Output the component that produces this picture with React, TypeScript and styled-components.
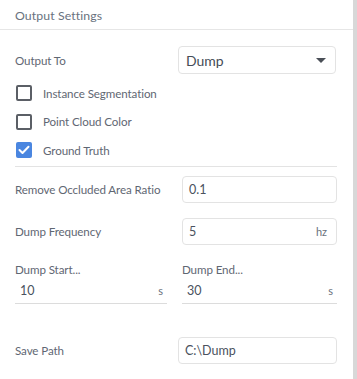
import React from "react";
import styled, { createGlobalStyle } from "styled-components";

const Global = createGlobalStyle`
  html, body { margin: 0; padding: 0; background: #ffffff; }
  body { font-family: Lato, "Open Sans", sans-serif; color: #5f6773; }
  * { box-sizing: border-box; }
`;

const Page = styled.div`
  display: flex;
  width: 357px;
  height: 379px;
  overflow: hidden;
`;

const Panel = styled.div`
  width: 353px;
  display: flex;
  flex-direction: column;
`;

const Scrollbar = styled.div`
  width: 4px;
  background: #d8d8d8;
`;

const Header = styled.div`
  height: 30px;
  border-bottom: 1px solid #e6e6e6;
  padding: 7px 15px 0;
  font-size: 12.3px;
  letter-spacing: 0.1px;
  line-height: 17px;
  color: #69727e;
`;

const Body = styled.div`
  padding: 16px 16px 0 15px;
  display: flex;
  flex-direction: column;
`;

const Row = styled.div<{ $h: number; $mt?: number }>`
  display: flex;
  align-items: center;
  height: ${(p) => p.$h}px;
  margin-top: ${(p) => p.$mt ?? 0}px;
`;

const Label = styled.div`
  flex: 1;
  font-size: 11.6px;
  letter-spacing: -0.1px;
  color: #5f6773;
`;

const Select = styled.div`
  width: 158px;
  height: 28px;
  border: 1px solid #e3e3e3;
  border-radius: 4px;
  display: flex;
  align-items: center;
  justify-content: space-between;
  padding: 0 9px 0 7px;
  font-size: 14px;
  color: #454c56;
  margin-right: 1px;
`;

const Arrow = styled.div`
  width: 0;
  height: 0;
  border-left: 5px solid transparent;
  border-right: 5px solid transparent;
  border-top: 5px solid #4a4f57;
`;

const Input = styled.div<{ $w: number }>`
  width: ${(p) => p.$w}px;
  height: 27px;
  border: 1px solid #e3e3e3;
  border-radius: 4px;
  display: flex;
  align-items: center;
  justify-content: space-between;
  padding: 0 9px 0 6px;
  font-size: 12.5px;
  color: #4a525e;
`;

const Unit = styled.span`
  font-size: 11px;
  color: #6a717c;
`;

const CheckRow = styled.div`
  display: flex;
  align-items: center;
  height: 28.5px;
  padding-left: 1px;
  gap: 11px;
  font-size: 11.6px;
  letter-spacing: -0.1px;
  color: #5f6773;
`;

const Box = styled.div<{ $on?: boolean }>`
  width: 16px;
  height: 16px;
  border-radius: 2px;
  border: ${(p) => (p.$on ? "none" : "2px solid #5b5f66")};
  background: ${(p) => (p.$on ? "#4a86e0" : "#fff")};
  display: flex;
  align-items: center;
  justify-content: center;
`;

const Divider = styled.div`
  height: 1px;
  background: #e3e3e3;
  margin-top: 1px;
`;

const Pair = styled.div`
  display: grid;
  grid-template-columns: 152px 155px;
  column-gap: 15px;
  margin-top: 16px;
`;

const Field = styled.div`
  display: flex;
  flex-direction: column;
`;

const SmallLabel = styled.div`
  font-size: 11.6px;
  letter-spacing: -0.1px;
  height: 18px;
  line-height: 18px;
  color: #5f6773;
`;

const Underlined = styled.div`
  display: flex;
  justify-content: space-between;
  align-items: center;
  height: 25px;
  padding: 0 4px 0 5px;
  border-bottom: 1px solid #dcdcdc;
  font-size: 12.5px;
  color: #4a525e;
`;

const Check = () => (
  <svg width="12" height="10" viewBox="0 0 12 10">
    <path d="M1.5 5 L4.5 8 L10.5 1.8" fill="none" stroke="#fff" strokeWidth="2" strokeLinecap="round" strokeLinejoin="round" />
  </svg>
);

export default function App() {
  return (
    <>
      <Global />
      <Page>
        <Panel>
          <Header>Output Settings</Header>
          <Body>
            <Row $h={28}>
              <Label>Output To</Label>
              <Select>
                <span>Dump</span>
                <Arrow />
              </Select>
            </Row>
            <div style={{ height: 5 }} />
            <CheckRow>
              <Box />
              <span>Instance Segmentation</span>
            </CheckRow>
            <CheckRow>
              <Box />
              <span>Point Cloud Color</span>
            </CheckRow>
            <CheckRow>
              <Box $on>
                <Check />
              </Box>
              <span>Ground Truth</span>
            </CheckRow>
            <Divider />
            <Row $h={27} $mt={9}>
              <Label>Remove Occluded Area Ratio</Label>
              <Input $w={155}>0.1</Input>
            </Row>
            <Row $h={27} $mt={15}>
              <Label>Dump Frequency</Label>
              <Input $w={155}>
                <span>5</span>
                <Unit>hz</Unit>
              </Input>
            </Row>
            <Pair>
              <Field>
                <SmallLabel>Dump Start...</SmallLabel>
                <Underlined>
                  <span>10</span>
                  <Unit>s</Unit>
                </Underlined>
              </Field>
              <Field>
                <SmallLabel>Dump End...</SmallLabel>
                <Underlined>
                  <span>30</span>
                  <Unit>s</Unit>
                </Underlined>
              </Field>
            </Pair>
            <Row $h={27} $mt={33}>
              <Label>Save Path</Label>
              <Input $w={159}>C:\Dump</Input>
            </Row>
          </Body>
        </Panel>
        <Scrollbar />
      </Page>
    </>
  );
}
